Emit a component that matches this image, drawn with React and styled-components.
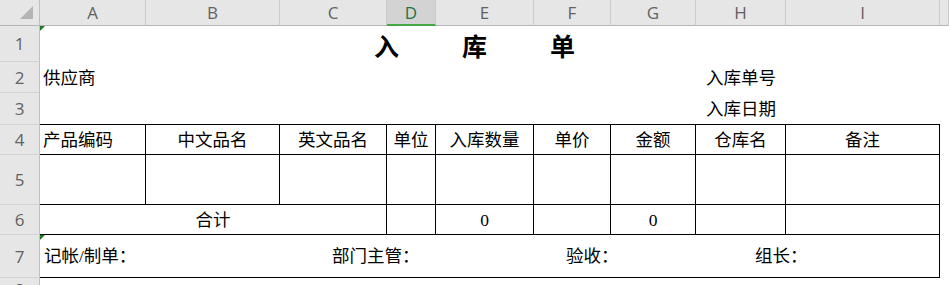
import React from 'react'
import styled, { createGlobalStyle, css } from 'styled-components'

// Sheet layout: row header + columns A..I + a sliver of J
const COLS = ['A', 'B', 'C', 'D', 'E', 'F', 'G', 'H', 'I', '']

const GlobalStyle = createGlobalStyle`
  html, body {
    margin: 0;
    padding: 0;
    background: #fff;
  }
`

const Sheet = styled.div`
  width: 949px;
  height: 285px;
  overflow: hidden;
  display: grid;
  grid-template-columns: 40px 106px 134px 107px 49px 98px 77px 85px 90px 154px 1fr;
  grid-template-rows: 26px 36px 31px 32px 30px 50px 30px 43px 1fr;
  font-family: "Liberation Serif", "Noto Sans CJK SC", serif;
  color: #000;
`

const Corner = styled.div`
  background: #e6e6e6;
  border-right: 1px solid #bfbfbf;
  border-bottom: 1px solid #b5b5b5;
  display: flex;
  align-items: flex-end;
  justify-content: flex-end;
  padding: 0 6px 6px 0;
  box-sizing: border-box;
`

const CornerMark = styled.div`
  width: 0;
  height: 0;
  border-left: 13px solid transparent;
  border-bottom: 13px solid #b4b4b4;
`

const ColHead = styled.div`
  background: ${p => (p.$active ? '#d3d3d3' : '#e6e6e6')};
  border-right: 1px solid #cacaca;
  border-bottom: ${p => (p.$active ? '2px solid #45a845' : '1px solid #b5b5b5')};
  display: flex;
  align-items: center;
  justify-content: center;
  box-sizing: border-box;
  padding-top: ${p => (p.$active ? '1px' : '0')};
  font-family: "Open Sans", "Liberation Sans", sans-serif;
  font-size: 17px;
  color: ${p => (p.$active ? '#217346' : '#626262')};
`

const RowHead = styled.div`
  grid-column: 1;
  background: #e6e6e6;
  border-right: 1px solid #bfbfbf;
  border-bottom: 1px solid #d2d2d2;
  display: flex;
  align-items: center;
  justify-content: center;
  box-sizing: border-box;
  font-family: "Open Sans", "Liberation Sans", sans-serif;
  font-size: 17px;
  color: #626262;
`

const Cell = styled.div`
  grid-column: span ${p => p.$span || 1};
  position: relative;
  display: flex;
  align-items: center;
  justify-content: ${p => (p.$left ? 'flex-start' : 'center')};
  padding: 2px 3px 0;
  box-sizing: border-box;
  font-size: 17.5px;
  line-height: 1;
  white-space: nowrap;
  ${p => p.$box && css`
    border-right: 1px solid #000;
    border-bottom: 1px solid #000;
  `}
  ${p => p.$under && css`
    border-bottom: 1px solid #000;
  `}
`

const Title = styled(Cell)`
  padding: 3px 0 0 32px;
  font-size: 25px;
  font-weight: 700;
  letter-spacing: 63px;
  font-family: "Noto Sans CJK SC", sans-serif;
`

const Marker = styled.span`
  position: absolute;
  top: 0;
  left: 0;
  width: 0;
  height: 0;
  border-top: 5px solid #1e7b1e;
  border-right: 5px solid transparent;
`

const Footer = styled(Cell)`
  display: grid;
  grid-template-columns: 288px 234px 189px 1fr;
  align-items: center;
  padding-left: 4px;
`

const Filler = styled.div`
  grid-column: span ${p => p.$span || 1};
`

export default function App() {
  return (
    <>
      <GlobalStyle />
      <Sheet>
        {/* Column headers */}
        <Corner><CornerMark /></Corner>
        {COLS.map((c, i) => (
          <ColHead key={i} $active={c === 'D'}>{c}</ColHead>
        ))}

        {/* Row 1 */}
        <RowHead>1</RowHead>
        <Title $span={9}><Marker />入库单</Title>
        <Filler />

        {/* Row 2 */}
        <RowHead>2</RowHead>
        <Cell $left $span={7}>供应商</Cell>
        <Cell>入库单号</Cell>
        <Filler $span={2} />

        {/* Row 3 */}
        <RowHead>3</RowHead>
        <Cell $under $span={7} />
        <Cell $under>入库日期</Cell>
        <Cell $under />
        <Filler />

        {/* Row 4 */}
        <RowHead>4</RowHead>
        <Cell $box $left>产品编码</Cell>
        <Cell $box>中文品名</Cell>
        <Cell $box>英文品名</Cell>
        <Cell $box>单位</Cell>
        <Cell $box>入库数量</Cell>
        <Cell $box>单价</Cell>
        <Cell $box>金额</Cell>
        <Cell $box>仓库名</Cell>
        <Cell $box>备注</Cell>
        <Filler />

        {/* Row 5 */}
        <RowHead>5</RowHead>
        {Array.from({ length: 9 }).map((_, i) => <Cell key={i} $box />)}
        <Filler />

        {/* Row 6 */}
        <RowHead>6</RowHead>
        <Cell $box $span={3}>合计</Cell>
        <Cell $box />
        <Cell $box>0</Cell>
        <Cell $box />
        <Cell $box>0</Cell>
        <Cell $box />
        <Cell $box />
        <Filler />

        {/* Row 7 */}
        <RowHead>7</RowHead>
        <Footer $box $span={9}>
          <Marker />
          <span>记帐/制单：</span>
          <span>部门主管：</span>
          <span>验收：</span>
          <span>组长：</span>
        </Footer>
        <Filler />

        {/* Row 8 */}
        <RowHead>8</RowHead>
      </Sheet>
    </>
  )
}
